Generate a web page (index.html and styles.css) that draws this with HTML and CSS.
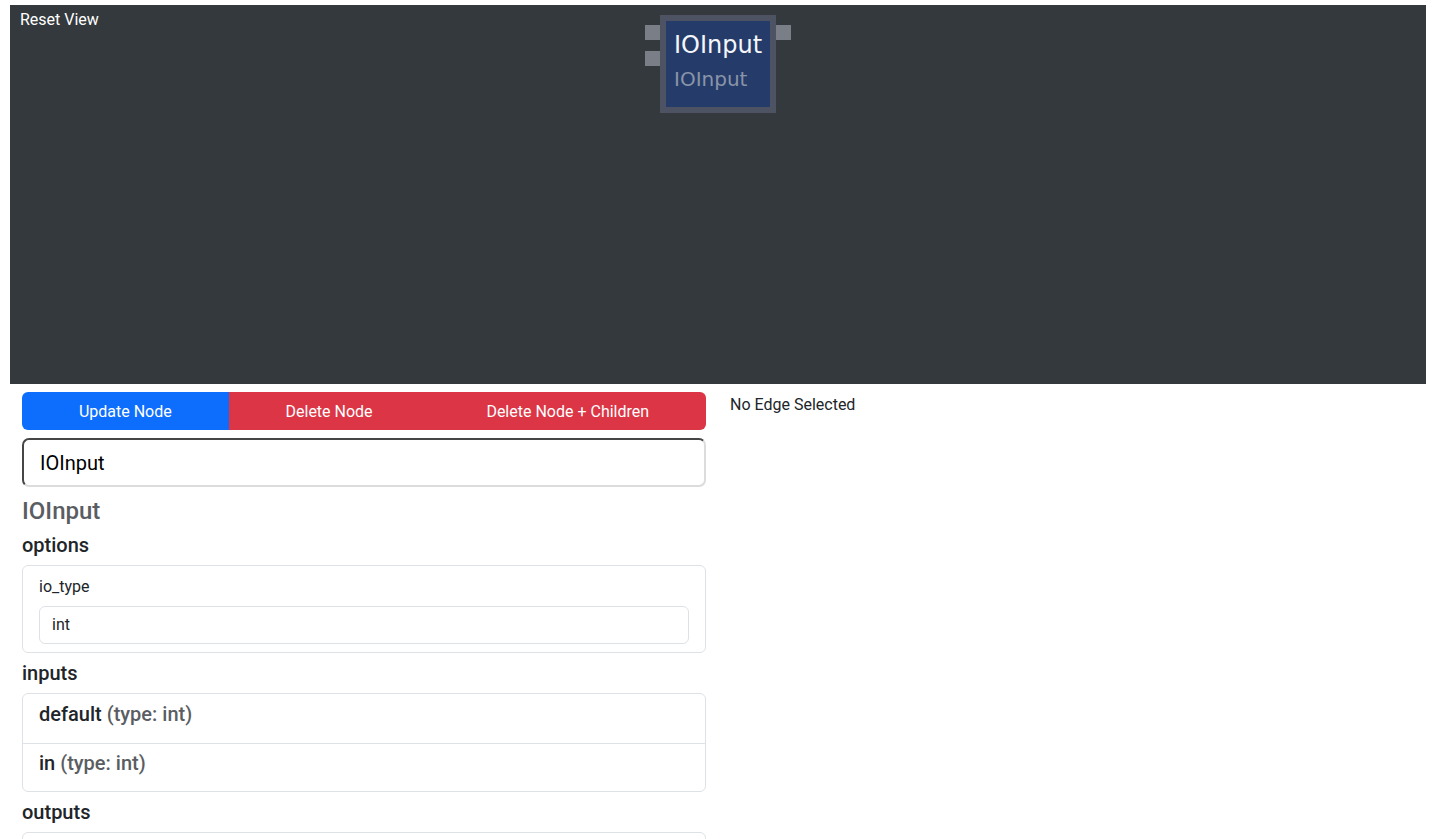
FILE: index.html
```html
<!DOCTYPE html>
<html>
<head>
<meta charset="utf-8">
<link rel="stylesheet" href="styles.css">
</head>
<body>
<div class="page">
  <div class="canvas">
    <button class="reset">Reset View</button>
    <div class="node">
      <span class="port in1"></span>
      <span class="port in2"></span>
      <span class="port out1"></span>
      <div class="node-body">
        <div class="node-title">IOInput</div>
        <div class="node-sub">IOInput</div>
      </div>
    </div>
  </div>
  <div class="row">
    <div class="col">
      <div class="btn-group">
        <button class="btn blue first">Update Node</button>
        <button class="btn red">Delete Node</button>
        <button class="btn red last">Delete Node + Children</button>
      </div>
      <input class="name-input" type="text" value="IOInput">
      <h4 class="type-title">IOInput</h4>
      <h5 class="section">options</h5>
      <div class="card">
        <div class="label">io_type</div>
        <div class="field">int</div>
      </div>
      <h5 class="section">inputs</h5>
      <div class="list">
        <div class="item"><b>default</b> <span class="muted">(type: int)</span></div>
        <div class="item"><b>in</b> <span class="muted">(type: int)</span></div>
      </div>
      <h5 class="section">outputs</h5>
      <div class="list">
        <div class="item empty"></div>
      </div>
    </div>
    <div class="col">
      <div class="edge">No Edge Selected</div>
    </div>
  </div>
</div>
</body>
</html>
```
FILE: styles.css
```css
* { box-sizing: border-box; }
html, body { margin: 0; padding: 0; background: #fff; }
body {
  font-family: Roboto, "Liberation Sans", sans-serif;
  font-size: 16px;
  line-height: 1.5;
  color: #212529;
  height: 839px;
  overflow: hidden;
}
.page { padding: 5px 8px 0 10px; }
.canvas {
  position: relative;
  height: 379px;
  background: #33393c;
  overflow: hidden;
}
.reset {
  position: absolute;
  left: 10px;
  top: 3px;
  background: none;
  border: 0;
  padding: 0;
  color: #fff;
  font-family: Roboto, "Liberation Sans", sans-serif;
  font-size: 16px;
  line-height: 24px;
}
.node {
  position: absolute;
  left: 650px;
  top: 10px;
  width: 116px;
  height: 98px;
  background: #4d5363;
  padding: 6px;
}
.node-body {
  width: 100%;
  height: 100%;
  background: #253c6b;
  padding: 0 8px;
  font-family: "DejaVu Sans", sans-serif;
}
.node-title { color: #f4f6fa; font-size: 24px; line-height: 34px; padding-top: 7px; }
.node-sub { color: #8a94a8; font-size: 20px; line-height: 30px; margin-top: 2px; }
.port { position: absolute; width: 15px; height: 15px; background: #7a7e86; }
.port.in1 { left: -15px; top: 10px; }
.port.in2 { left: -15px; top: 36px; }
.port.out1 { right: -15px; top: 10px; }
.row { display: flex; }
.col { width: 708px; padding: 8px 12px 0; }
.btn-group { display: flex; }
.btn {
  flex: 1 1 auto;
  border: 0;
  height: 38px;
  color: #fff;
  font-family: Roboto, "Liberation Sans", sans-serif;
  font-size: 16px;
  padding: 0;
}
.blue { background: #0d6efd; }
.red { background: #dc3545; }
.first { border-radius: 6px 0 0 6px; }
.last { border-radius: 0 6px 6px 0; }
.name-input {
  display: block;
  width: 100%;
  height: 49px;
  margin-top: 8px;
  border: 2px inset #a0a0a0;
  border-color: #9a9a9a #dcdcdc #dcdcdc #9a9a9a;
  border-radius: 7px;
  padding: 0 16px;
  font-family: Roboto, "Liberation Sans", sans-serif;
  font-size: 20px;
  color: #000;
  background: #fff;
}
.type-title {
  margin: 10px 0 0;
  font-size: 24px;
  font-weight: 500;
  line-height: 29px;
  color: #5a5d61;
}
.section {
  margin: 7px 0 8px;
  font-size: 20px;
  font-weight: 500;
  line-height: 24px;
}
.card + .section, .list + .section { margin-top: 8px; }
.card {
  border: 1px solid #dee2e6;
  border-radius: 6px;
  padding: 8px 16px;
}
.label { font-size: 16px; line-height: 24px; padding-top: 1px; }
.field {
  margin-top: 7px;
  border: 1px solid #dee2e6;
  border-radius: 6px;
  height: 38px;
  padding: 6px 12px;
  font-size: 16px;
  line-height: 24px;
}
.list {
  border: 1px solid #dee2e6;
  border-radius: 6px;
}
.item {
  height: 49px;
  padding: 6px 16px;
  font-size: 20px;
  font-weight: 500;
  line-height: 28px;
}
.item + .item { border-top: 1px solid #dee2e6; height: 48px; padding-top: 5px; }
.item b { font-weight: 500; }
.muted { color: #5a5d61; }
.edge { font-size: 16px; line-height: 24px; margin-top: 1px; }
```
